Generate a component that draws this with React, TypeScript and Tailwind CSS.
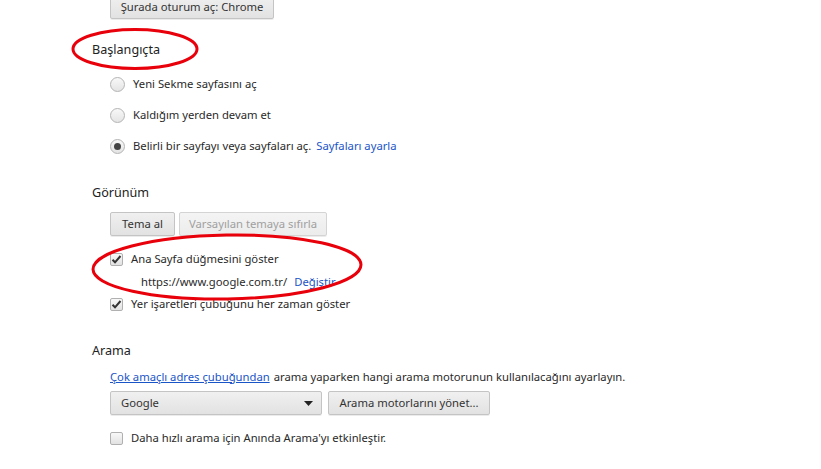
import React from 'react';

const font = { fontFamily: '"Noto Sans", "Open Sans", sans-serif' };

function Btn({ children, disabled, className = '' }: { children: React.ReactNode; disabled?: boolean; className?: string }) {
  return (
    <div
      className={`h-6 flex items-center whitespace-nowrap px-[8px] rounded-[2px] border bg-gradient-to-b shadow-[0_1px_0_rgba(0,0,0,0.08)] text-[11.25px] ${
        disabled ? 'text-[#a0a0a0] border-[#d4d4d4] from-[#f4f4f4] to-[#ececec]' : 'text-[#333] border-[#c4c4c4] from-[#f0f0f0] to-[#e2e2e2]'
      } ${className}`}
    >
      {children}
    </div>
  );
}

function Radio({ checked }: { checked?: boolean }) {
  return (
    <div className="w-[15px] h-[15px] rounded-full border border-[#b4b4b4] bg-gradient-to-b from-[#f8f8f8] to-[#e4e4e4] flex items-center justify-center shrink-0">
      {checked && <div className="w-[7px] h-[7px] rounded-full bg-[#444]" />}
    </div>
  );
}

function Check({ checked }: { checked?: boolean }) {
  return (
    <div className="w-[13px] h-[13px] rounded-[2px] border border-[#b0b0b0] bg-gradient-to-b from-[#f8f8f8] to-[#e2e2e2] flex items-center justify-center shrink-0">
      {checked && (
        <svg width="11" height="11" viewBox="0 0 11 11">
          <path d="M1.5 5.8 L4 8.3 L9.5 2" fill="none" stroke="#333" strokeWidth="2" />
        </svg>
      )}
    </div>
  );
}

export default function App() {
  return (
    <div className="relative w-[821px] h-[469px] overflow-hidden bg-white text-[#2a2a2a] whitespace-nowrap" style={font}>
      {/* Signin */}
      <div className="pl-[110px] -mt-[5px] flex">
        <Btn className="w-[164px] justify-center">Şurada oturum aç: Chrome</Btn>
      </div>

      {/* Başlangıçta */}
      <div className="pl-[92px] mt-[21px] h-5 flex items-center text-[12.6px] text-[#222]">Başlangıçta</div>
      <div className="pl-[110px] text-[11.25px]">
        <div className="mt-[14px] h-5 flex items-center gap-[8px]">
          <Radio />
          <span>Yeni Sekme sayfasını aç</span>
        </div>
        <div className="mt-[11px] h-5 flex items-center gap-[8px]">
          <Radio />
          <span>Kaldığım yerden devam et</span>
        </div>
        <div className="mt-[11px] h-5 flex items-center gap-[8px]">
          <Radio checked />
          <span>Belirli bir sayfayı veya sayfaları aç.</span>
          <span className="text-[#1a55c8] -ml-[3px]">Sayfaları ayarla</span>
        </div>
      </div>

      {/* Görünüm */}
      <div className="pl-[92px] mt-[27px] h-5 flex items-center text-[12.6px] text-[#222]">Görünüm</div>
      <div className="pl-[110px] text-[11.25px]">
        <div className="mt-[9px] flex gap-[4px]">
          <Btn className="w-[65px] justify-center">Tema al</Btn>
          <Btn disabled className="w-[148px] justify-center">Varsayılan temaya sıfırla</Btn>
        </div>
        <div className="mt-[13px] h-5 flex items-center gap-[8px]">
          <Check checked />
          <span>Ana Sayfa düğmesini göster</span>
        </div>
        <div className="mt-[3px] h-5 flex items-center pl-[31px] gap-[7px]">
          <span>https://www.google.com.tr/</span>
          <span className="text-[#1a55c8]">Değiştir</span>
        </div>
        <div className="mt-[2px] h-5 flex items-center gap-[8px]">
          <Check checked />
          <span>Yer işaretleri çubuğunu her zaman göster</span>
        </div>
      </div>

      {/* Arama */}
      <div className="pl-[92px] mt-[27px] h-5 flex items-center text-[12.6px] text-[#222]">Arama</div>
      <div className="pl-[110px] text-[11.25px]">
        <div className="mt-[6px] h-5 flex items-center">
          <span className="text-[#1a55c8] underline">Çok amaçlı adres çubuğundan</span>
          <span className="ml-[4px]">arama yaparken hangi arama motorunun kullanılacağını ayarlayın.</span>
        </div>
        <div className="mt-[4px] flex gap-[6px]">
          <Btn className="w-[212px] justify-between pl-[10px] pr-[8px]">
            <span>Google</span>
            <svg width="9" height="5" viewBox="0 0 9 5">
              <path d="M0 0 H9 L4.5 5 Z" fill="#222" />
            </svg>
          </Btn>
          <Btn className="w-[162px] justify-center">Arama motorlarını yönet...</Btn>
        </div>
        <div className="mt-[13px] h-5 flex items-center gap-[8px]">
          <Check />
          <span>Daha hızlı arama için Anında Arama'yı etkinleştir.</span>
        </div>
      </div>

      {/* red annotations */}
      <svg className="absolute left-0 top-0 pointer-events-none" width="821" height="469">
        <ellipse cx="135" cy="49" rx="62" ry="19.5" fill="none" stroke="#e8000b" strokeWidth="3" />
        <ellipse cx="227" cy="267" rx="134" ry="32" fill="none" stroke="#e8000b" strokeWidth="3" transform="rotate(-1 227 267)" />
      </svg>
    </div>
  );
}
